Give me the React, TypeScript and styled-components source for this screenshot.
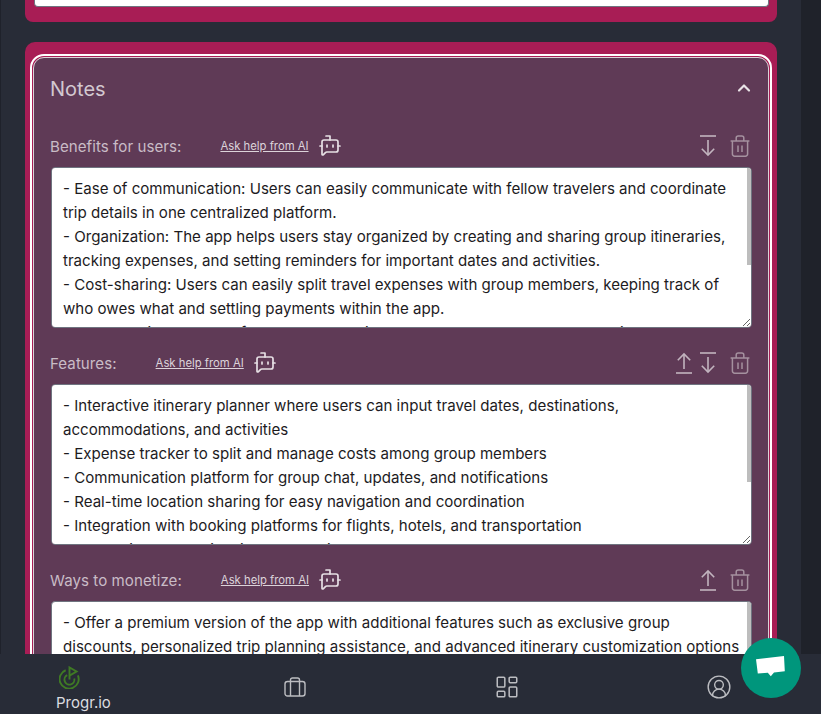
import { createGlobalStyle, styled } from "styled-components";
import { BotMessageSquare, ChevronUp, CircleUserRound, LayoutDashboard } from "lucide-react";

const FONT = `"Inter", "Noto Sans", sans-serif`;

const FIELDS = [
  {
    label: "Benefits for users:",
    up: false,
    down: true,
    thumb: 97,
    text: `- Ease of communication: Users can easily communicate with fellow travelers and coordinate trip details in one centralized platform.
- Organization: The app helps users stay organized by creating and sharing group itineraries, tracking expenses, and setting reminders for important dates and activities.
- Cost-sharing: Users can easily split travel expenses with group members, keeping track of who owes what and settling payments within the app.
- Collaboration: The app fosters collaboration among group members by allowing them to vote on activities.`,
  },
  {
    label: "Features:",
    up: true,
    down: true,
    thumb: 97,
    text: `- Interactive itinerary planner where users can input travel dates, destinations, accommodations, and activities
- Expense tracker to split and manage costs among group members
- Communication platform for group chat, updates, and notifications
- Real-time location sharing for easy navigation and coordination
- Integration with booking platforms for flights, hotels, and transportation
- Customizable packing lists and reminders
- Shared photo albums for every trip`,
  },
  {
    label: "Ways to monetize:",
    up: true,
    down: false,
    thumb: 110,
    text: `- Offer a premium version of the app with additional features such as exclusive group discounts, personalized trip planning assistance, and advanced itinerary customization options
- Partner with travel companies and earn commission on bookings`,
  },
];

function ArrowDownIcon() {
  return (
    <svg width="16" height="22" viewBox="0 0 16 22" fill="none" stroke="currentColor" strokeWidth="1.6">
      <path d="M0 1h16" />
      <path d="M8 5v15" />
      <path d="M1.8 13.8 8 20l6.2-6.2" />
    </svg>
  );
}

function ArrowUpIcon() {
  return (
    <svg width="16" height="22" viewBox="0 0 16 22" fill="none" stroke="currentColor" strokeWidth="1.6">
      <path d="M0 21h16" />
      <path d="M8 17V2" />
      <path d="M1.8 8.2 8 2l6.2 6.2" />
    </svg>
  );
}

function TrashIcon() {
  return (
    <svg width="20" height="22" viewBox="0 0 20 22" fill="none" stroke="currentColor" strokeWidth="1.5">
      <path d="M.6 6h18.8" />
      <path d="M2.4 6v13a2.2 2.2 0 0 0 2.2 2.2h10.8a2.2 2.2 0 0 0 2.2-2.2V6" />
      <path d="M6.2 6V3a2 2 0 0 1 2-2h3.6a2 2 0 0 1 2 2v3" />
      <path d="M8 10.5v6.5M12 10.5v6.5" />
    </svg>
  );
}

function LogoIcon() {
  return (
    <svg width="21" height="23" viewBox="0 0 22 24" fill="none" stroke="#3f7a24" strokeWidth="2">
      <path d="M7 4.4a10 10 0 1 0 12.8 5.4" />
      <path d="M8.6 9.6a5.2 5.2 0 1 0 7.4 3.4" />
      <path d="M11 14V1.5l7.4 4.2L11 10" />
    </svg>
  );
}

function CaseIcon() {
  return (
    <svg width="22" height="20" viewBox="0 0 22 20" fill="none" stroke="currentColor" strokeWidth="1.4">
      <rect x="1" y="4.5" width="20" height="14.5" rx="2.5" />
      <path d="M6.5 4.5V19M15.5 4.5V19" />
      <path d="M6.5 4.5V3a2 2 0 0 1 2-2h5a2 2 0 0 1 2 2v1.5" />
    </svg>
  );
}

function ChatIcon() {
  return (
    <svg width="30" height="24" viewBox="0 0 30 24" fill="#fff">
      <path d="M0 3.3 28 0l.8 15.2-10.8 1.2-3.2 3.9-3-3.6-10 .8z" />
    </svg>
  );
}

export default function App() {
  return (
    <Page>
      <GlobalStyle />
      <ScrollArea>
        <Content>
          <PreviousCard>
            <PreviousBox />
          </PreviousCard>

          <Card>
            <Frame>
              <Panel>
                <TitleRow>
                  <Title>Notes</Title>
                  <ChevronUp size={20} strokeWidth={2.6} />
                </TitleRow>

                {FIELDS.map(({ label, up, down, thumb, text }) => (
                  <Field key={label}>
                    <FieldHead>
                      <FieldLabel>{label}</FieldLabel>
                      <AskLink href="#">Ask help from AI</AskLink>
                      <BotMessageSquare size={24} strokeWidth={1.7} />
                      <Actions>
                        {up && <ArrowUpIcon />}
                        {down && <ArrowDownIcon />}
                        <TrashSlot>
                          <TrashIcon />
                        </TrashSlot>
                      </Actions>
                    </FieldHead>
                    <NoteWrap>
                      <NoteArea readOnly defaultValue={text} />
                      <ScrollThumb $height={thumb} />
                    </NoteWrap>
                  </Field>
                ))}
              </Panel>
            </Frame>
          </Card>
        </Content>
        <Rail />
      </ScrollArea>

      <BottomNav>
        <BrandItem>
          <LogoIcon />
          <NavText>Progr.io</NavText>
        </BrandItem>
        <NavItem>
          <CaseIcon />
        </NavItem>
        <NavItem>
          <LayoutDashboard size={26} strokeWidth={1.4} />
        </NavItem>
        <NavItem>
          <CircleUserRound size={26} strokeWidth={1.3} />
        </NavItem>
      </BottomNav>

      <ChatButton>
        <ChatIcon />
      </ChatButton>
    </Page>
  );
}

const GlobalStyle = createGlobalStyle`
  html, body {
    margin: 0;
    height: 100%;
    overflow: hidden;
    background: #282c37;
  }
  * {
    box-sizing: border-box;
  }
`;

const Page = styled.div`
  position: relative;
  display: flex;
  flex-direction: column;
  height: 100vh;
  overflow: hidden;
  font-family: ${FONT};
  background: #282c37;
`;

const ScrollArea = styled.div`
  flex: 1;
  min-height: 0;
  display: flex;
  overflow: hidden;
`;

const Content = styled.main`
  flex: 1;
  min-width: 0;
  padding: 0 24px;
  border-left: 1px solid #1f222b;
`;

const Rail = styled.div`
  width: 20px;
  background: #1f222a;
`;

const PreviousCard = styled.div`
  height: 22px;
  padding: 0 8px 0 9px;
  background: #a81d55;
  border-radius: 0 0 8px 8px;
  margin-bottom: 20px;
`;

const PreviousBox = styled.div`
  height: 7px;
  background: #fff;
  border: 1px solid #6f7480;
  border-top: none;
  border-radius: 0 0 4px 4px;
`;

const Card = styled.section`
  padding: 12px 5px 5px;
  background: #a81d55;
  border-radius: 10px;
`;

const Frame = styled.div`
  padding: 1px;
  border: 2px solid #fff;
  border-radius: 14px;
`;

const Panel = styled.div`
  padding: 15px 16px 20px 17px;
  background: #5f3a56;
  border: 1px solid #d9d3d8;
  border-radius: 11px;
  color: #cdbfca;
`;

const TitleRow = styled.div`
  display: flex;
  align-items: center;
  justify-content: space-between;
  height: 30px;
  margin-bottom: 28px;

  svg {
    margin-right: -2px;
    color: #e9e3e7;
  }
`;

const Title = styled.h2`
  margin: 1px 0 0 -1px;
  font-size: 20px;
  font-weight: 400;
  color: #d3c8d0;
`;

const Field = styled.div`
  margin-bottom: 20px;
`;

const FieldHead = styled.div`
  display: flex;
  align-items: center;
  height: 30px;
  margin-bottom: 6px;

  > svg {
    margin-left: 9px;
    color: #e6dfe4;
  }
`;

const FieldLabel = styled.span`
  font-size: 15.1px;
  margin: 0 39px 0 -1px;
  letter-spacing: 0.05px;
  color: #c9bcc6;
`;

const AskLink = styled.a`
  font-size: 11.3px;
  color: #dcd3da;
  text-decoration: underline;
`;

const Actions = styled.div`
  margin-left: auto;
  padding-right: 2px;
  display: flex;
  align-items: center;
  gap: 8px;
  color: #c2b4bf;
`;

const TrashSlot = styled.span`
  display: flex;
  margin-left: 6px;
  color: #a5919f;
`;

const NoteWrap = styled.div`
  position: relative;
`;

const NoteArea = styled.textarea`
  display: block;
  width: 100%;
  height: 161px;
  padding: 9px 8px 8px 11px;
  border: 1px solid #6f7480;
  border-radius: 4px;
  background: #fff;
  color: #1d1b1e;
  font-family: ${FONT};
  font-size: 15.1px;
  line-height: 24px;
  outline: none;
`;

const ScrollThumb = styled.span<{ $height: number }>`
  position: absolute;
  top: 1px;
  right: 1px;
  width: 4.5px;
  height: ${({ $height }) => $height}px;
  background: #bdbdbd;
  border-top-right-radius: 3px;
`;

const BottomNav = styled.nav`
  display: grid;
  grid-template-columns: 189px repeat(3, 212px);
  height: 60px;
  flex-shrink: 0;
  overflow: hidden;
  background: #282c37;
  color: #bcbdc1;
`;

const NavItem = styled.div`
  display: flex;
  align-items: center;
  justify-content: center;
  padding-top: 6px;
`;

const BrandItem = styled.div`
  display: flex;
  flex-direction: column;
  align-items: flex-start;
  padding: 12px 0 0 56px;

  svg {
    margin-left: 3px;
  }
`;

const NavText = styled.span`
  font-size: 15px;
  line-height: 18px;
  margin-top: 5px;
  color: #dcdde0;
`;

const ChatButton = styled.button`
  position: absolute;
  right: 20px;
  bottom: 16px;
  width: 60px;
  height: 60px;
  padding: 0;
  display: flex;
  align-items: center;
  justify-content: center;
  border: none;
  border-radius: 50%;
  background: #00967c;
`;
